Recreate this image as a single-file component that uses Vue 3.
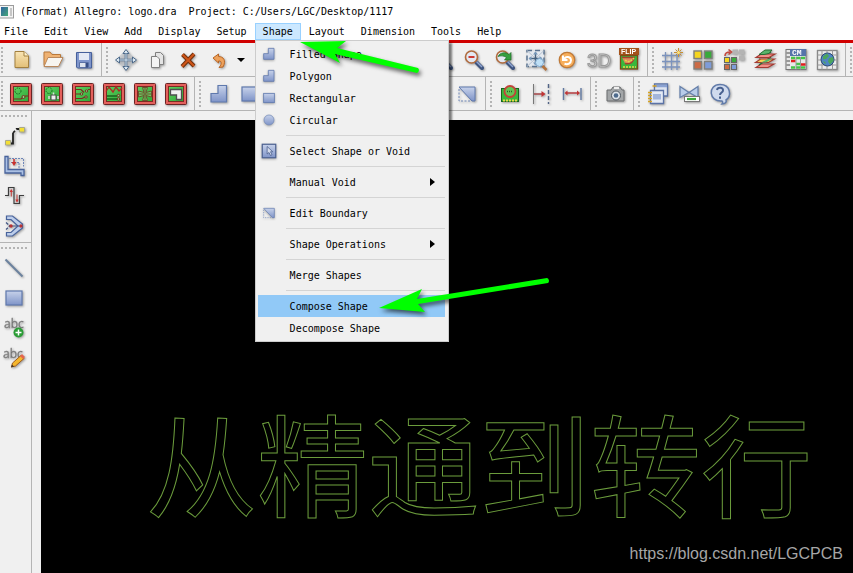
<script setup>
const board = '<rect x="1.500" y="1.500" width="21" height="21" rx="1" fill="#e4605c" stroke="#6a2424"/><rect x="4.500" y="4.500" width="15" height="15" fill="url(#g-green)" stroke="#7a2c22"/>'
const lens = '<path d="M14.500 14.500l5.500 5.500" stroke="#3f5580" stroke-width="4" stroke-linecap="round"/><path d="M14.500 13.500l5.500 5.500" stroke="#8fa4d0" stroke-width="1.500"/><circle cx="9.500" cy="9" r="6" fill="#e3e8f2" stroke="#b06a3c" stroke-width="1.600"/>'
const pcb = '<rect x="3.500" y="6.500" width="17" height="13" fill="#38b83c" stroke="#17641c"/><path d="M5 18.500h14" stroke="#e6d84a" stroke-width="2" stroke-dasharray="2 1"/>'

const icons = {
  fresh: '<path d="M6 3.500h9l4.500 4.500v11.500h-13.500z" fill="url(#g-tan)" stroke="#a3803f"/><path d="M15 3.500v4.500h4.500" fill="#fff3cc" stroke="#a3803f"/>',
  open: '<path d="M4 17.500v-13.500h6l2 2.500h8.500v4" fill="#efb273" stroke="#b9783a"/><path d="M4 18.500l4-9h15l-4.500 9z" fill="#f7f5f0" stroke="#b9885c"/>',
  save: '<path d="M5.500 4.500h15v15.500h-14l-1-1z" fill="#7f95cb" stroke="#46609b"/><path d="M8 5h10v7h-10z" fill="#e4e9f4"/><path d="M8.500 14.500h9v5h-9z" fill="#dfe4ee" stroke="#5a70a5"/><path d="M14.500 15h2.500v4.500h-2.500z" fill="#384f86"/>',
  move: '<path d="M12 1.500l10.500 10.500-10.500 10.500-10.500-10.500z" fill="#b9bfc6" opacity=".55"/><path d="M12 4v16M4 12h16" stroke="#4d6a8b" stroke-width="2.600"/><path d="M12 1.500l3 4h-6zM12 22.500l3-4h-6zM1.500 12l4-3v6zM22.500 12l-4-3v6z" fill="#dce8f1" stroke="#4d6a8b"/><path d="M12 5.500v13M5.500 12h13" stroke="#dce8f1"/>',
  copy: '<path d="M10.500 4.500h5l3 3v9h-8z" fill="#e4e4e4" stroke="#808080"/><path d="M6.500 8.500h5.500l2.500 2.500v8.500h-8z" fill="#f4f4f4" stroke="#808080"/>',
  remove: '<path d="M6.500 6.500l11.500 11.500M18 6l-12 12.500" stroke="#71300d" stroke-width="4"/><path d="M6.500 6.500l11.500 11.500M18 6l-12 12.500" stroke="#cf5518" stroke-width="2"/>',
  undo: '<path d="M6 10l5.500-4v2.500c5 0 8 4 4.500 10.500l-4 .5c3-3 3-7-.5-6.500v2z" fill="#eea25c" stroke="#b76525"/>',
  redo: '<path d="M19 9.500l-6.500-4v3c-5 0-8 3-5.500 10l4 1.500c-3-4-2-7 1.500-7v3z" fill="#eea25c" stroke="#b76525"/>',
  zoomIn: lens + '<path d="M6.500 9h6M9.500 6v6" stroke="#c33" stroke-width="2"/>',
  zoomOut: lens + '<path d="M6.500 9h6" stroke="#cc3a34" stroke-width="2"/>',
  zoomBack: lens + '<path d="M5 8.500c2-4 7-5 11-2l2-2v7.500h-6.500l2-2.500c-3-2-6-2-8.500-1z" fill="#34a03e" stroke="#1c6b25" stroke-width=".7"/>',
  zoomFit: '<rect x="3" y="2.500" width="17" height="16" fill="#e4e9ef" stroke="#5a7390" stroke-width="1.500" stroke-dasharray="5 3"/><path d="M3 2.500l17 16M20 2.500l-17 16" stroke="#b4c0cf"/><path d="M11.500 4.500v12M5.500 10.500h12" stroke="#46617e" stroke-width="1.500"/><path d="M11.500 3.500l2.500 3h-5zM11.500 17.500l2.500-3h-5zM4.500 10.500l3-2.500v5zM18.500 10.500l-3-2.500v5z" fill="#7899ba"/><circle cx="15.500" cy="14.500" r="4" fill="#bfe0f6" stroke="#7fa5c8"/><path d="M18.500 18l4 4" stroke="#b5733c" stroke-width="2.500"/>',
  refresh: '<circle cx="12" cy="12" r="7.700" fill="#f7ae5b" stroke="#c07a38" stroke-width="1.300"/><path d="M8 7.500v4.500h4.500M9 11.500c1.500-4 7-3 7 .8 0 3-3 4.700-6.500 3.500" fill="none" stroke="#fff" stroke-width="2"/>',
  three: '<text x="1" y="19" font-family="Liberation Sans" font-size="19" fill="#d0d0d0" stroke="#999">3D</text>',
  flip: '<rect x="2" y="0" width="20" height="7" fill="#a5521a"/><text x="4" y="6" font-family="Liberation Sans" font-size="7" font-weight="700" fill="#fff">FLIP</text><rect x="3.500" y="7.500" width="17" height="13.500" fill="#38b83c" stroke="#7b4b17" stroke-width="1.300"/><path d="M5 9.500h12c-1 6-5 7-9 6" fill="#e18a5c" stroke="#a6422c" stroke-width="1.500"/><path d="M8 12c4 3 6 1 9-2M6 19h13" stroke="#e6d84a" stroke-width="1.500" stroke-dasharray="2 1"/>',
  grid: '<path d="M2 7.500h18M2 13.500h18M2 19h18M5.500 4v18M11.500 4v18M17 7v15" stroke="#7c93bd" stroke-width="1.300"/><path d="M18.500 0v9M14 4.500h9M15.500 1.500l6 6M21.500 1.500l-6 6" stroke="#c69136"/><circle cx="18.500" cy="4.500" r="1.500" fill="#ffe37a"/>',
  tiles: '<g stroke="#80807c" stroke-width="1.400"><rect x="3" y="3" width="7.500" height="7.500" fill="#f6d51e"/><rect x="13.500" y="3" width="7.500" height="7.500" fill="#38aa3b"/><rect x="3" y="13.500" width="7.500" height="7.500" fill="#cc6b45"/><rect x="13.500" y="13.500" width="7.500" height="7.500" fill="#7e9cd8"/></g>',
  shift: '<path d="M10.500 1.500h5.500v5h-5.500zM17 1.500h5.500v5h-5.500zM17 7.500h5.500v5h-5.500z" fill="#b4b4b4"/><g stroke="#666"><rect x="2.500" y="9.500" width="5" height="5" fill="#f6d51e"/><rect x="9.500" y="9.500" width="5" height="5" fill="#38aa3b"/><rect x="2.500" y="16.500" width="5" height="5" fill="#cc6b45"/><rect x="9.500" y="16.500" width="5" height="5" fill="#7e9cd8"/></g><path d="M3 8c0-3 2-4 5-4M6.500 1.500l3 2.500-3 2.500" fill="none" stroke="#c4483e" stroke-width="1.600"/>',
  layers: '<path d="M3 19.500l5-3.500h13l-6 3.500z" fill="#f09088" stroke="#a33a32" stroke-width="1.200"/><path d="M6 17l12-8M6 10l12-6" stroke="#276b35" stroke-width="1.400"/><path d="M2.500 14.500l5-3.500h14l-6 3.500z" fill="#f3cf55" stroke="#a33a32" stroke-width="1.200"/><path d="M3 9.500l5-3.500h14l-6 3.500z" fill="#f09088" stroke="#a33a32" stroke-width="1.200"/><path d="M6 6.500l6-4.500h7l-3 3.500-5 1z" fill="#59b56a" stroke="#286c35"/><path d="M8 14.500l7-3.500h4l-6 3.500z" fill="#59b56a"/>',
  cm: '<rect x="2" y="1.500" width="20" height="20" fill="#e8e8e8" stroke="#777"/><path d="M2 5h4M2 9h4M2 13h4M2 17h4" stroke="#999" stroke-width="2"/><rect x="6" y="1" width="16" height="7" fill="#5674aa"/><text x="8" y="7" font-family="Liberation Mono" font-size="8" font-weight="700" fill="#fff">CM</text><path d="M7 10h14M12 16h5M7 19.500h14" stroke="#45c548" stroke-width="2.500" stroke-dasharray="4 1"/><path d="M7 13h4.500M17 16.500h4.500" stroke="#e01d1d" stroke-width="2.500"/><path d="M12 9v12.500M16.500 9v12.500" stroke="#999"/>',
  globe: '<rect x="2.500" y="2.500" width="19.500" height="19" fill="#ececec" stroke="#888" stroke-width="1.300"/><path d="M2.500 7h19M2.500 12h19M2.500 17h19M7 2.500v19M12 2.500v19M17.500 2.500v19" stroke="#999"/><circle cx="12.500" cy="11.500" r="6.500" fill="#4f84c4" stroke="#2b4a75"/><path d="M8 8.500l4-3 2 2.500-3 3-3 .5zM14 10l4-1 .5 4-3.500 3.500-2-3zM7.500 13l3 1v2.500z" fill="#4ba65b"/>',
  boardA: board + '<circle cx="9" cy="9" r="3" fill="none" stroke="#17651e" stroke-dasharray="1.500 1"/><path d="M5 17h7l2-1.500M16 14h3" fill="none" stroke="#7b2c20" stroke-width="1.200"/><circle cx="14.500" cy="15" r="1.500" fill="#8cd88a" stroke="#7b2c20"/>',
  boardB: board + '<circle cx="9" cy="8.500" r="3" fill="none" stroke="#17651e" stroke-dasharray="1.500 1"/><rect x="11" y="13" width="5" height="5" fill="#eee" stroke="#444"/><path d="M9 14v3M18 14v3M13.500 10.500v2" stroke="#ddd" stroke-width="1.500"/>',
  boardC: board + '<path d="M5 7.500h5l3 3M5 12h4M5 16.500h6l3-1.500M17 7.500h2" fill="none" stroke="#7b2c20" stroke-width="1.200"/><g fill="#8cd88a" stroke="#7b2c20"><circle cx="10.500" cy="12" r="1.200"/><circle cx="15.500" cy="9" r="1.200"/><circle cx="15" cy="15" r="1.200"/></g>',
  boardD: board + '<path d="M4 9.500l3-4.500 4 5 3-5 3 4 3-3" fill="none" stroke="#ac2c24" stroke-width="1.300"/><path d="M5 14h10M5 17h10" stroke="#19611d" stroke-width="1.300"/><circle cx="16.500" cy="13.500" r="1.200" fill="#8cd88a" stroke="#7b2c20"/><circle cx="16.500" cy="17" r="1.200" fill="#8cd88a" stroke="#7b2c20"/>',
  boardE: board + '<path d="M9.500 5.500h5l-1.500 5 5.500-1.500v6l-5.500-1.500 1.500 5h-5l1.500-5-5.500 1.500v-6l5.500 1.500z" fill="#6cc764" stroke="#6b522c"/><path d="M12 5v14M5 12h14" stroke="#6b522c"/>',
  boardF: board + '<path d="M6.500 7.500h11v10h-5v-4.500h-6z" fill="#f1f1f1" stroke="#4e4e4e" stroke-width="1.300"/>',
  poly: '<path d="M4 11.500h7v-8h8.500v16.500h-15.500z" fill="url(#g-blue)" stroke="#5f79ad" stroke-width="1.200"/>',
  rect: '<rect x="4" y="5" width="16" height="14" fill="url(#g-blue)" stroke="#5f79ad" stroke-width="1.200"/>',
  circle: '<circle cx="12" cy="12" r="7.500" fill="url(#g-blue)" stroke="#6e86b6"/>',
  select: '<rect x="3" y="3" width="18" height="18" fill="url(#g-blue)" stroke="#4a6090" stroke-width="1.600"/><path d="M9.500 6v10l2.500-2 2 4 2-1-2-4h3z" fill="#d5dcec" stroke="#455a88"/>',
  edit: '<path d="M4 5h16v14h-3z" fill="url(#g-blue)" stroke="#5f79ad"/><path d="M4 7v12h11" stroke="#6e86b6" stroke-dasharray="2 1.500"/>',
  chip: pcb + '<circle cx="12" cy="9.500" r="5.500" fill="#64c553" stroke="#c34238" stroke-width="1.800"/><path d="M9 9.500h6" stroke="#245e27" stroke-width="1.600" stroke-dasharray="1 1"/>',
  snap: '<path d="M4.500 2v20" stroke="#777"/><path d="M19.500 2v20" stroke="#526587" stroke-width="1.400" stroke-dasharray="4 2"/><path d="M5 12h10" stroke="#a33b3e" stroke-width="1.400"/><path d="M12.500 9l4 3-4 3z" fill="#c13434"/>',
  measure: '<path d="M3.500 6v12M21 6v12" stroke="#6078a0" stroke-width="1.400"/><path d="M6 11h12" stroke="#b33336" stroke-width="1.400"/><path d="M4.500 11l3-2.500v5zM20 11l-3-2.500v5z" fill="#c13434"/>',
  camera: '<path d="M4 8h4l2-3h7l2 3h2v11h-17z" fill="#a3a6a8" stroke="#6b6d6f"/><path d="M11 6h5" stroke="#eee" stroke-width="2"/><circle cx="13" cy="13.500" r="4.500" fill="#dee4ea" stroke="#4e565e"/><circle cx="13" cy="13.500" r="2.300" fill="#4e6b8d"/>',
  notes: '<path d="M8.500 2h13v12h-13z" fill="#dde4f1" stroke="#5b73a6" stroke-width="1.300"/><path d="M9 4h12" stroke="#8ba2d2" stroke-width="2.500"/><path d="M4.500 8.500h13v13h-13z" fill="#e4eaf5" stroke="#5b73a6" stroke-width="1.300"/><path d="M7 12h8v5.500h-8z" fill="#a3b5da"/><path d="M2 10.500h4M2 13.500h4M2 16.500h4M2 19.500h4M6.500 4h4" stroke="#d7a321" stroke-width="1.600"/>',
  waive: '<path d="M3 4.500l9 6 9-6v11l-9-5-9 5z" fill="#b8cce9" stroke="#6680ab" stroke-width="1.300"/><rect x="7.500" y="14.500" width="15" height="5" fill="#fff" stroke="#777"/><path d="M10 17h9" stroke="#3bab3b" stroke-width="2.200"/>',
  help: '<path d="M12 2.500c11 0 11.500 12 6 15.500 1 2-1 4-4 4 1-1 1-2 0-3-13.500 1-14.500-16.500-2-16.500z" fill="#cfdaee" stroke="#607aa9" stroke-width="1.500"/><path d="M9 8c.5-3 6.500-3 6 .5 0 2-3 2-3 4.500M12 14.500v2.200" fill="none" stroke="#47608f" stroke-width="2"/>',
  route: '<path d="M6 19.500h5v-10.500" fill="none" stroke="#222" stroke-width="1.800"/><path d="M11 9l3.500-4h3" fill="none" stroke="#222" stroke-width="1.800" stroke-dasharray="3 2"/><path d="M3.500 16.500h5v4.500h-5zM17.500 3.500h5v4.500h-5z" fill="#f4df35" stroke="#a9a98a"/>',
  slide: '<path d="M7 4.500h14.500v8M17 8.500h-9M17 9v6" fill="none" stroke="#6e86b8" stroke-dasharray="2 1"/><path d="M3 2.500h3v13h16v6h-3v-2.500h-16z" fill="#abc0e3" stroke="#48639c" stroke-width="1.300"/><path d="M9.500 8h5l-2.500 4z" fill="#c9312e"/><path d="M12 5v4" stroke="#c9312e" stroke-width="1.500"/>',
  delay: '<path d="M3 11.500h3.500v-8h5.500v16h5.500v-8h4.500" fill="none" stroke="#3d3d3d" stroke-width="1.200"/><path d="M9.300 12.500v-6M15 10.500v7" stroke="#bf3c36"/><path d="M9.300 5l1.700 3h-3.400zM15 18.500l1.700-3h-3.400z" fill="#c33"/>',
  miter: '<path d="M4.500 2h6l10 8v4l-10 8h-6v-3.500h4.500l7-6.500-7-6.500h-4.500z" fill="#bccdea" stroke="#48639c" stroke-width="1.200"/><path d="M4 8.500l4 3.500-4 3.500" fill="none" stroke="#405583" stroke-width="1.300" stroke-dasharray="3 1"/><path d="M9 12h10" stroke="#405583"/><circle cx="9" cy="12" r="1.700" fill="#b93434"/><circle cx="19" cy="12" r="1.700" fill="#b93434"/>',
  line: '<path d="M3.500 3.500l17 17" stroke="#6b829e" stroke-width="2"/>',
  addText: '<text x="2" y="12" font-family="Open Sans" font-size="12" fill="#707070" stroke="#888" stroke-width=".3">abc</text><circle cx="16.500" cy="16.500" r="5" fill="#2a9c35"/><path d="M16.500 13.500v6M13.500 16.500h6" stroke="#fff" stroke-width="1.500"/>',
  editText: '<text x="1" y="12" font-family="Open Sans" font-size="12" fill="#707070" stroke="#888" stroke-width=".3">abc</text><path d="M9.500 21l1-4 8.500-7.500 3 3-8.500 7.500z" fill="#f4b62c" stroke="#a25c1c"/><path d="M18 10l3 3 2-2-3-3z" fill="#e4654e"/><path d="M9 21.500l1-3 2 2z" fill="#443526"/>'
}

const rowOne = [
  ['fresh', 'open', 'save'],
  ['move', 'copy', 'remove', 'undo', 'caret', 'redo', 'caret'],
  ['tiles', 'line', 'rect', 'circle', 'zoomIn', 'zoomOut', 'zoomBack', 'zoomFit', 'refresh', 'three', 'flip'],
  ['grid', 'tiles', 'shift', 'layers', 'cm', 'globe'],
  ['grid']
]
const rowTwo = [
  ['boardA', 'boardB', 'boardC', 'boardD', 'boardE', 'boardF'],
  ['poly', 'rect', 'circle', 'select', 'poly', 'rect', 'circle', 'select', 'edit'],
  ['chip', 'snap', 'measure'],
  ['camera'],
  ['notes', 'waive', 'help']
]
const side = [
  ['route', 'slide', 'delay', 'miter'],
  ['line', 'rect', 'addText', 'editText']
]
const menus = ['File', 'Edit', 'View', 'Add', 'Display', 'Setup', 'Shape', 'Layout', 'Dimension', 'Tools', 'Help']
const shapeMenu = [
  [{ text: 'Filled Shape', icon: 'poly' }, { text: 'Polygon', icon: 'poly' }, { text: 'Rectangular', icon: 'rect' }, { text: 'Circular', icon: 'circle' }],
  [{ text: 'Select Shape or Void', icon: 'select', large: true }],
  [{ text: 'Manual Void', sub: true }],
  [{ text: 'Edit Boundary', icon: 'edit' }],
  [{ text: 'Shape Operations', sub: true }],
  [{ text: 'Merge Shapes' }],
  [{ text: 'Compose Shape', active: true }, { text: 'Decompose Shape' }]
]
</script>

<template>
  <div class="window">
    <svg class="defs" aria-hidden="true">
      <defs>
        <linearGradient id="g-blue" x1="0" y1="0" x2="0" y2="1"><stop offset="0" stop-color="#c7d2ea" /><stop offset="1" stop-color="#7f94c8" /></linearGradient>
        <linearGradient id="g-green" x1="0" y1="0" x2="1" y2="1"><stop offset="0" stop-color="#5fd05f" /><stop offset="1" stop-color="#2fa838" /></linearGradient>
        <linearGradient id="g-tan" x1="0" y1="0" x2="0" y2="1"><stop offset="0" stop-color="#f9e5b5" /><stop offset="1" stop-color="#e2bf77" /></linearGradient>
        <linearGradient id="g-app" x1="0" y1="0" x2="1" y2="1"><stop offset="0" stop-color="#2f62a0" /><stop offset="1" stop-color="#45a878" /></linearGradient>
      </defs>
    </svg>

    <header class="title">
      <svg class="app-icon" viewBox="0 0 14 14" aria-hidden="true">
        <rect x="-2" y=".5" width="15.500" height="12.500" fill="#f4f4f4" stroke="#9c9c9c" />
        <rect x="1" y="2" width="7" height="9" fill="url(#g-app)" />
        <path d="M10 3h2v8h-2z" fill="#c6c6c6" />
      </svg>
      <h1>(Format) Allegro: logo.dra&nbsp; Project: C:/Users/LGC/Desktop/1117</h1>
    </header>

    <nav class="menubar">
      <div v-for="name in menus" :key="name" class="menu-slot">
        <button type="button" class="menu-button" :class="{ open: name === 'Shape' }">{{ name }}</button>
        <div v-if="name === 'Shape'" class="dropdown" role="menu">
          <div v-for="(group, g) in shapeMenu" :key="g" class="menu-group">
            <button v-for="item in group" :key="item.text" type="button" role="menuitem" class="menu-item" :class="{ active: item.active }">
              <span class="menu-icon">
                <svg v-if="item.icon" :class="{ large: item.large }" viewBox="0 0 24 24" fill="none" aria-hidden="true" v-html="icons[item.icon]"></svg>
              </span>
              <span class="menu-text">{{ item.text }}</span>
              <svg v-if="item.sub" class="sub-arrow" viewBox="0 0 5 8" aria-hidden="true"><path d="M0 0l5 4-5 4z" /></svg>
            </button>
          </div>
        </div>
      </div>
    </nav>

    <div v-for="(row, r) in [rowOne, rowTwo]" :key="r" class="toolbar" role="toolbar">
      <div v-for="(group, g) in row" :key="g" class="tool-group">
        <button v-for="(name, i) in group" :key="i" type="button" class="tool" :class="{ caret: name === 'caret' }" :aria-label="name">
          <svg v-if="name === 'caret'" class="caret-mark" viewBox="0 0 8 4" aria-hidden="true"><path d="M0 0h8l-4 4z" /></svg>
          <svg v-else class="icon" viewBox="0 0 24 24" fill="none" aria-hidden="true" v-html="icons[name]"></svg>
        </button>
      </div>
    </div>

    <div class="workspace">
      <aside class="sidebar">
        <div v-for="(group, g) in side" :key="g" class="side-group">
          <button v-for="name in group" :key="name" type="button" class="side-tool" :aria-label="name">
            <svg class="icon" viewBox="0 0 24 24" fill="none" aria-hidden="true" v-html="icons[name]"></svg>
          </button>
        </div>
      </aside>
      <main class="canvas">
        <p class="artwork" lang="zh-CN">从精通到转行</p>
        <p class="credit">https://blog.csdn.net/LGCPCB</p>
      </main>
    </div>

    <svg class="arrows" viewBox="0 0 560 330" aria-hidden="true">
      <path d="M300 42L346 41L337 48L418 68A3 3 0 0 1 417 73L335 54L340 63Z" />
      <path d="M379 308L422 289L417 299L547 278A3 3 0 0 1 548 283L418 304L425 312Z" />
    </svg>
  </div>
</template>

<style>
body {
  margin: 0;
  background: #f0f0f0;
}
</style>

<style scoped>
.window {
  position: relative;
  display: flex;
  flex-direction: column;
  min-height: 100vh;
  overflow: hidden;
  background: #f0f0f0;
  color: #000;
  font-family: "DejaVu Sans Mono", "Liberation Mono", monospace;
  font-size: 10px;
  line-height: 16px;
}
button {
  margin: 0;
  padding: 0;
  border: 0;
  background: none;
  color: inherit;
  font: inherit;
}
.defs {
  position: absolute;
  width: 0;
  height: 0;
}
.title {
  display: flex;
  align-items: center;
  gap: 6px;
  height: 23px;
  background: #fff;
}
.app-icon {
  width: 14px;
  height: 14px;
}
h1 {
  margin: 0;
  font-size: 10px;
  font-weight: 400;
  white-space: nowrap;
}
.menubar {
  display: flex;
  height: 17px;
  margin-left: -4px;
  background: #fff;
  border-bottom: 3px solid #d00000;
}
.menu-slot {
  position: relative;
}
.menu-button {
  height: 17px;
  padding: 0 7px;
  border: 1px solid transparent;
  line-height: 15px;
}
.menu-button.open {
  background: #cce8ff;
  border-color: #99d1ff;
}
.dropdown {
  position: absolute;
  z-index: 2;
  top: 17px;
  left: 0;
  width: 187px;
  padding: 2px 3px 2px 2px;
  background: #f0f0f0;
  border: 1px solid #ccc;
  box-shadow: 3px 3px 2px rgba(0, 0, 0, 0.5);
}
.menu-group + .menu-group::before {
  content: "";
  display: block;
  height: 1px;
  margin: 4px 0 4px 28px;
  background: #d4d4d4;
}
.menu-item {
  display: flex;
  align-items: center;
  width: 100%;
  height: 22px;
  text-align: left;
}
.menu-item.active {
  background: #91c9f7;
}
.menu-icon {
  display: flex;
  align-items: center;
  justify-content: center;
  width: 22px;
  margin-right: 10px;
}
.menu-icon svg {
  width: 16px;
  height: 16px;
  filter: drop-shadow(0 1px 1px rgba(0, 0, 0, 0.3));
}
.menu-icon svg.large {
  width: 18px;
  height: 18px;
}
.menu-text {
  flex: 1;
  padding-top: 2px;
}
.sub-arrow {
  width: 5px;
  height: 8px;
  margin-right: 10px;
}
.toolbar {
  display: flex;
  height: 33px;
  margin-left: -3px;
  border-bottom: 1px solid #b4b4b4;
}
.tool-group {
  position: relative;
  display: flex;
  flex: none;
  padding: 0 3px 0 8px;
  border-right: 1px solid #b4b4b4;
}
.tool-group:last-child {
  border-right: 0;
}
.tool-group::before {
  content: "";
  position: absolute;
  top: 4px;
  bottom: 3px;
  left: 4px;
  width: 2px;
  background: repeating-linear-gradient(#b4b4b4 0 2px, transparent 2px 4px);
}
.tool {
  display: flex;
  align-items: center;
  justify-content: center;
  width: 31px;
}
.tool.caret {
  width: 13px;
}
.caret-mark {
  width: 8px;
  height: 4px;
}
.icon {
  width: 24px;
  height: 24px;
  overflow: visible;
  filter: drop-shadow(1px 1px 1px rgba(0, 0, 0, 0.35));
}
.workspace {
  display: flex;
  flex: 1;
}
.sidebar {
  width: 31px;
  border-right: 1px solid #b4b4b4;
}
.side-group {
  position: relative;
  padding: 10px 0 1px;
  border-bottom: 1px solid #b4b4b4;
}
.side-group:last-child {
  border-bottom: 0;
}
.side-group::before {
  content: "";
  position: absolute;
  top: 4px;
  left: 1px;
  right: 3px;
  height: 2px;
  background: repeating-linear-gradient(90deg, #b4b4b4 0 2px, transparent 2px 4px);
}
.side-tool {
  display: flex;
  align-items: center;
  justify-content: center;
  width: 28px;
  height: 30px;
}
.canvas {
  display: flex;
  flex: 1;
  flex-direction: column;
  justify-content: space-between;
  margin: 9px 0 0 9px;
  background: #000;
}
.artwork {
  margin: 285px 0 0 105px;
  color: transparent;
  font-family: "Noto Sans CJK SC", sans-serif;
  font-size: 111px;
  font-weight: 400;
  line-height: 112px;
  white-space: nowrap;
  -webkit-text-stroke: 1px #6b9c3c;
}
.credit {
  margin: 0 10px 9px;
  color: #a6a6a6;
  font-family: "Liberation Sans", Arial, sans-serif;
  font-size: 16px;
  line-height: 20px;
  text-align: right;
}
.arrows {
  position: absolute;
  z-index: 3;
  top: 0;
  left: 0;
  width: 560px;
  height: 330px;
  fill: #0f0;
  pointer-events: none;
  filter: drop-shadow(2px 3px 2px rgba(0, 0, 0, 0.6));
}
</style>
